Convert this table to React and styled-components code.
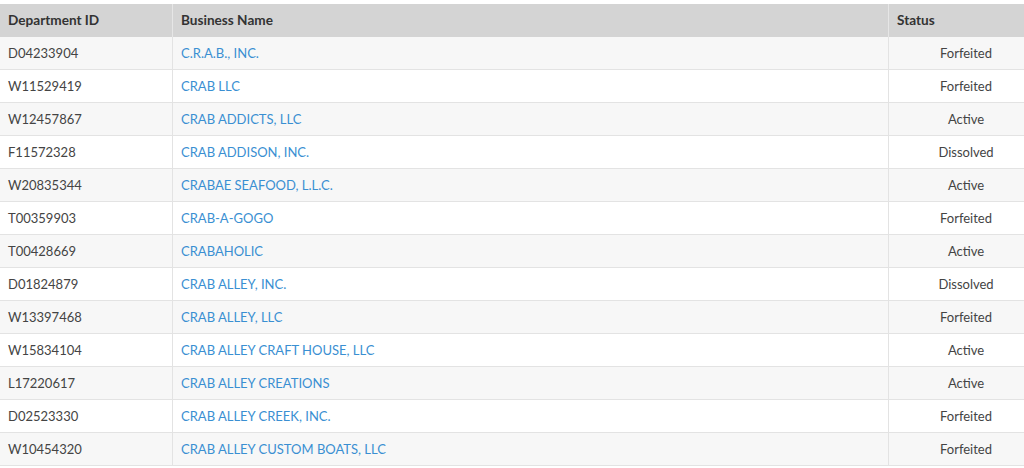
import React from "react";
import styled, { createGlobalStyle } from "styled-components";

const Global = createGlobalStyle`
  html, body { margin: 0; padding: 0; background: #fff; overflow: hidden; }
  body { font-family: Lato, "Liberation Sans", sans-serif; }
`;

const Wrap = styled.div`
  padding-top: 4px;
  width: 1044px;
`;

const Table = styled.table`
  width: 1044px;
  border-collapse: separate;
  border-spacing: 0;
  table-layout: fixed;
  font-size: 13px;
`;

const Th = styled.th`
  background: #d4d4d4;
  color: #333;
  font-weight: 700;
  font-size: 13.6px;
  text-align: left;
  padding: 6px 8px;
  line-height: 21px;
  height: 33px;
  box-sizing: border-box;
  border-right: 1px solid ${(p) => (p.$last ? "transparent" : "#e6e6e6")};
`;

const Tr = styled.tr`
  background: ${(p) => (p.$odd ? "#f7f7f7" : "#ffffff")};
`;

const Td = styled.td`
  padding: 6px 8px;
  line-height: 20px;
  height: 33px;
  box-sizing: border-box;
  border-bottom: 1px solid #e3e3e3;
  border-right: 1px solid ${(p) => (p.$last ? "transparent" : "#e3e3e3")};
  color: #444;
  text-align: ${(p) => (p.$center ? "center" : "left")};
  white-space: nowrap;
`;

const Link = styled.a`
  color: #3a8fd2;
  text-decoration: none;
`;

const rows = [
  ["D04233904", "C.R.A.B., INC.", "Forfeited"],
  ["W11529419", "CRAB LLC", "Forfeited"],
  ["W12457867", "CRAB ADDICTS, LLC", "Active"],
  ["F11572328", "CRAB ADDISON, INC.", "Dissolved"],
  ["W20835344", "CRABAE SEAFOOD, L.L.C.", "Active"],
  ["T00359903", "CRAB-A-GOGO", "Forfeited"],
  ["T00428669", "CRABAHOLIC", "Active"],
  ["D01824879", "CRAB ALLEY, INC.", "Dissolved"],
  ["W13397468", "CRAB ALLEY, LLC", "Forfeited"],
  ["W15834104", "CRAB ALLEY CRAFT HOUSE, LLC", "Active"],
  ["L17220617", "CRAB ALLEY CREATIONS", "Active"],
  ["D02523330", "CRAB ALLEY CREEK, INC.", "Forfeited"],
  ["W10454320", "CRAB ALLEY CUSTOM BOATS, LLC", "Forfeited"],
];

export default function App() {
  return (
    <>
      <Global />
      <Wrap>
        <Table>
          <colgroup>
            <col style={{ width: 173 }} />
            <col style={{ width: 716 }} />
            <col />
          </colgroup>
          <thead>
            <tr>
              <Th>Department ID</Th>
              <Th>Business Name</Th>
              <Th $last>Status</Th>
            </tr>
          </thead>
          <tbody>
            {rows.map((r, i) => (
              <Tr key={r[0]} $odd={i % 2 === 0}>
                <Td>{r[0]}</Td>
                <Td>
                  <Link href="#">{r[1]}</Link>
                </Td>
                <Td $center $last>
                  {r[2]}
                </Td>
              </Tr>
            ))}
          </tbody>
        </Table>
      </Wrap>
    </>
  );
}
